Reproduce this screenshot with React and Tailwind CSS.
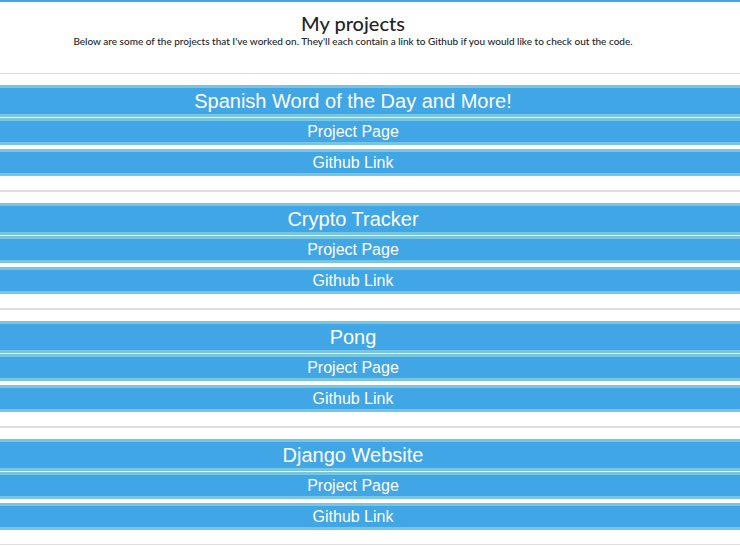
const projects = [
  'Spanish Word of the Day and More!',
  'Crypto Tracker',
  'Pong',
  'Django Website',
];

const linkStyle =
  'block h-[27px] border-y-[3px] border-[#78c5df] bg-[#41a6e5] pr-[34px] text-base leading-[21px] text-white';

function Project({ title, last }) {
  return (
    <section>
      <h2 className="mb-px h-8 border-y-[3px] border-[#78c5df] bg-[#41a6e5] pr-[34px] text-[20px] leading-[26px] text-white">
        {title}
      </h2>
      <a href="#" className={linkStyle}>Project Page</a>
      <a href="#" className={`mt-1 ${linkStyle}`}>Github Link</a>
      <hr className={last ? 'mt-3.5 border-t border-[#dedede]' : 'mt-3.5 mb-[11px] border-t-2 border-[#dedede]'} />
    </section>
  );
}

export default function App() {
  return (
    <main className="border-t-2 border-[#41a6e5] bg-white text-center font-['Liberation_Sans',Arial,sans-serif]">
      <header className="pt-2 pr-[34px] pb-6 font-['Lato',sans-serif] font-medium text-[#212529]">
        <h1 className="text-[20px] leading-[26px] font-medium">My projects</h1>
        <p className="text-[10px] leading-[11px]">
          Below are some of the projects that I've worked on. They'll each contain a link to Github if you would like to check out the code.
        </p>
      </header>
      <hr className="mt-0.5 mb-[11px] border-t border-[#dedede]" />
      {projects.map((title, i) => (
        <Project key={title} title={title} last={i === projects.length - 1} />
      ))}
    </main>
  );
}
